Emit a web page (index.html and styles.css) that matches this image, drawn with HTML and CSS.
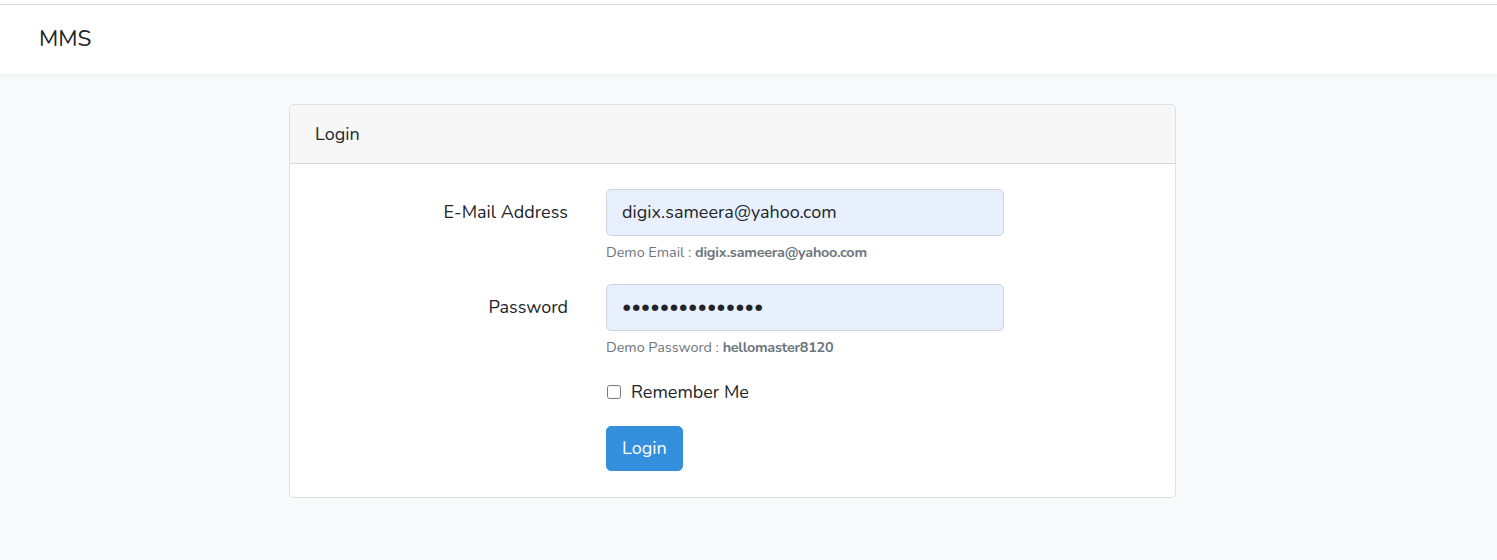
FILE: index.html
```html
<!DOCTYPE html>
<html lang="en">
<head>
<meta charset="utf-8">
<title>MMS</title>
<link rel="stylesheet" href="styles.css">
</head>
<body>
<div class="topstrip"></div>
<nav class="navbar">
  <a class="brand" href="#">MMS</a>
</nav>
<main class="main">
  <div class="card">
    <div class="card-header">Login</div>
    <div class="card-body">
      <form class="form">
        <div class="row">
          <label class="col-label" for="email">E-Mail Address</label>
          <div class="field">
            <input id="email" class="input" type="email" value="digix.sameera@yahoo.com">
            <small class="hint">Demo Email : <b>digix.sameera@yahoo.com</b></small>
          </div>
        </div>
        <div class="row">
          <label class="col-label" for="password">Password</label>
          <div class="field">
            <input id="password" class="input" type="password" value="hellomaster8120">
            <small class="hint">Demo Password : <b>hellomaster8120</b></small>
          </div>
        </div>
        <div class="row">
          <div></div>
          <div class="field">
            <label class="check"><input type="checkbox" class="check-input"> Remember Me</label>
          </div>
        </div>
        <div class="row last">
          <div></div>
          <div class="field">
            <button type="button" class="btn">Login</button>
          </div>
        </div>
      </form>
    </div>
  </div>
</main>
</body>
</html>
```
FILE: styles.css
```css
* { box-sizing: border-box; }
html, body { margin: 0; padding: 0; }
body {
  background: #f8fafc;
  font-family: "Nunito", Lato, "Noto Sans", sans-serif;
  font-size: 18px;
  line-height: 1.6;
  color: #212529;
}
.topstrip {
  height: 5px;
  background: #fff;
  border-bottom: 1px solid #dcdcdc;
}
.navbar {
  background: #fff;
  height: 69px;
  display: flex;
  align-items: center;
  padding: 0 0 0 39px;
  box-shadow: 0 2px 5px rgba(0, 0, 0, 0.05);
  position: relative;
}
.brand {
  color: #212529;
  text-decoration: none;
  font-size: 22.5px;
  line-height: 1;
}
.main { padding: 30px 0; }
.card {
  width: 887px;
  margin-left: 289px;
  background: #fff;
  border: 1px solid rgba(0, 0, 0, 0.125);
  border-radius: 5px;
  overflow: hidden;
}
.card-header {
  background: #f7f7f7;
  border-bottom: 1px solid rgba(0, 0, 0, 0.125);
  padding: 14.5px 25px 14.5px;
  line-height: 28.8px;
}
.card-body { padding: 25px 25px 26px; }
.row {
  display: grid;
  grid-template-columns: 253px 398px;
  column-gap: 38px;
  margin-bottom: 20px;
}
.row.last { margin-bottom: 0; }
.col-label {
  text-align: right;
  padding-top: 9px;
  line-height: 28.8px;
}
.field { display: flex; flex-direction: column; align-items: flex-start; }
.input {
  width: 100%;
  height: 47px;
  padding: 7.5px 15px;
  font: inherit;
  font-size: 18px;
  color: #212529;
  background: #e8f0fe;
  border: 1px solid #ced4da;
  border-radius: 5px;
  outline: none;
}
.hint {
  margin-top: 5px;
  font-size: 14.4px;
  line-height: 23px;
  color: #6c757d;
}
.hint b { font-weight: 700; letter-spacing: -0.25px; }
.check {
  position: relative;
  padding-left: 25px;
  line-height: 26.8px;
}
.check-input {
  appearance: none;
  -webkit-appearance: none;
  position: absolute;
  left: 1px;
  top: 6px;
  width: 14px;
  height: 14px;
  margin: 0;
  background: #fff;
  border: 1px solid #767676;
  border-radius: 2.5px;
}
.btn {
  font: inherit;
  font-size: 18px;
  line-height: 28.8px;
  color: #fff;
  background: #3490dc;
  border: 1px solid #3490dc;
  border-radius: 5px;
  padding: 7.5px 15px;
}
```
